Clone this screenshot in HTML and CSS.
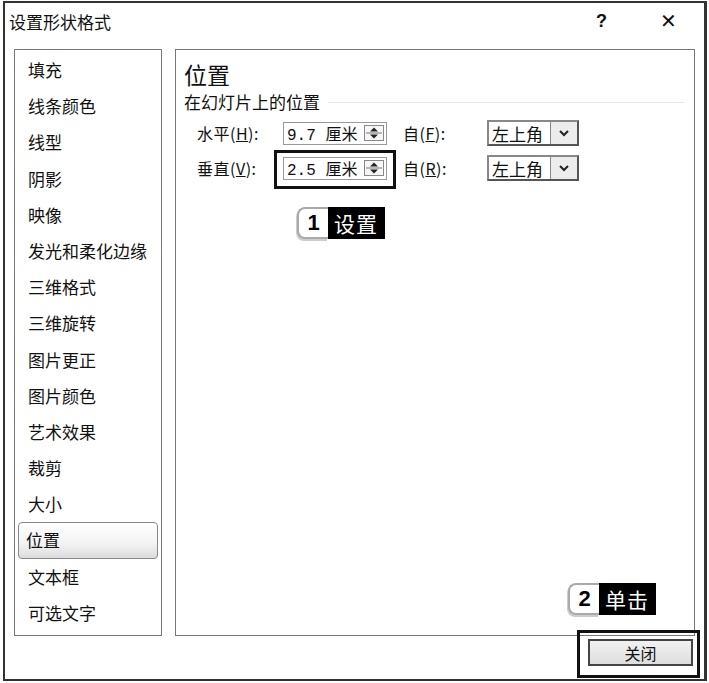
FILE: index.html
```html
<!DOCTYPE html>
<html lang="zh">
  <head>
    <meta charset="UTF-8" />
    <title>设置形状格式</title>
    <link rel="stylesheet" href="styles.css">
  </head>
  <body>
    <div class="dialog">
      <div class="titleBar">
        <span class="title">设置形状格式</span>
        <span class="help">?</span>
        <span class="close">✕</span>
      </div>

      <div class="content">
        <ul class="menu">
          <li>填充</li>
          <li>线条颜色</li>
          <li>线型</li>
          <li>阴影</li>
          <li>映像</li>
          <li>发光和柔化边缘</li>
          <li>三维格式</li>
          <li>三维旋转</li>
          <li>图片更正</li>
          <li>图片颜色</li>
          <li>艺术效果</li>
          <li>裁剪</li>
          <li>大小</li>
          <li class="active">位置</li>
          <li>文本框</li>
          <li>可选文字</li>
        </ul>

        <div class="panel">
          <h2>位置</h2>
          <div class="group">
            <span>在幻灯片上的位置</span>
            <span class="rule"></span>
          </div>

          <div class="row">
            <label class="label">水平(<u>H</u>):</label>
            <div class="spin">
              <span class="value">9.7 厘米</span>
              <span class="spinBtn">
                <svg width="20" height="16" viewBox="0 0 20 16">
                  <rect x="0.5" y="0.5" width="19" height="15" fill="#f6f6f6" stroke="#888"/>
                  <line x1="2" y1="8" x2="18" y2="8" stroke="#777"/>
                  <path d="M6 6.5 L10 2.5 L14 6.5 Z" fill="#222"/>
                  <path d="M6 9.5 L10 13.5 L14 9.5 Z" fill="#222"/>
                </svg>
              </span>
            </div>
            <label class="label from">自(<u>F</u>):</label>
            <div class="select">
              <span class="value">左上角</span>
              <span class="selBtn">
                <svg width="12" height="8" viewBox="0 0 12 8">
                  <path d="M2 2 L6 6 L10 2" fill="none" stroke="#222" stroke-width="2"/>
                </svg>
              </span>
            </div>
          </div>

          <div class="row">
            <label class="label">垂直(<u>V</u>):</label>
            <div class="spin">
              <span class="value">2.5 厘米</span>
              <span class="spinBtn">
                <svg width="20" height="16" viewBox="0 0 20 16">
                  <rect x="0.5" y="0.5" width="19" height="15" fill="#f6f6f6" stroke="#888"/>
                  <line x1="2" y1="8" x2="18" y2="8" stroke="#777"/>
                  <path d="M6 6.5 L10 2.5 L14 6.5 Z" fill="#222"/>
                  <path d="M6 9.5 L10 13.5 L14 9.5 Z" fill="#222"/>
                </svg>
              </span>
            </div>
            <label class="label from">自(<u>R</u>):</label>
            <div class="select">
              <span class="value">左上角</span>
              <span class="selBtn">
                <svg width="12" height="8" viewBox="0 0 12 8">
                  <path d="M2 2 L6 6 L10 2" fill="none" stroke="#222" stroke-width="2"/>
                </svg>
              </span>
            </div>
          </div>
        </div>
      </div>

      <div class="footer">
        <button class="closeButton">关闭</button>
      </div>

      <!-- annotations laid over the dialog -->
      <div class="mark markSpin"></div>
      <div class="mark markClose"></div>
      <div class="callout calloutOne"><span class="num">1</span><span class="tag">设置</span></div>
      <div class="callout calloutTwo"><span class="num">2</span><span class="tag">单击</span></div>
    </div>
  </body>
</html>
```

FILE: styles.css
```css
body {
  margin: 0;
  background: #fff;
  font-family: "Noto Sans CJK SC", "Liberation Sans", sans-serif;
  color: #111;
}

.dialog {
  position: relative;
  box-sizing: border-box;
  margin: 1px 0 0 3px;
  width: 704px;
  height: 680px;
  border: 2px solid #333;
  border-right-width: 3px;
  background: #fff;
}

.titleBar {
  display: flex;
  align-items: center;
  height: 36px;
  padding-left: 4px;
  font-size: 17px;
}

.title {
  flex: 1;
}

.help {
  font-family: "Liberation Sans", sans-serif;
  font-size: 18px;
  font-weight: bold;
  width: 64px;
}

.close {
  font-family: "DejaVu Sans", sans-serif;
  font-size: 20px;
  width: 44px;
}

.content {
  display: flex;
  gap: 13px;
  padding: 10px 0 0 9px;
}

.menu {
  list-style: none;
  margin: 0;
  padding: 2px 3px 3px;
  box-sizing: border-box;
  width: 148px;
  height: 587px;
  border: 1px solid #777;
}

.menu li {
  height: 36.2px;
  line-height: 34px;
  padding-left: 9px;
  font-size: 17px;
  box-sizing: border-box;
  border: 1px solid transparent;
}

.menu li.active {
  border: 1px solid #888;
  border-radius: 4px;
  background: linear-gradient(#ffffff, #f3f3f3 60%, #dcdcdc);
  padding-left: 7px;
}

.panel {
  box-sizing: border-box;
  width: 520px;
  height: 587px;
  border: 1px solid #777;
  padding: 7px 8px 0 8px;
}

.panel h2 {
  margin: 0;
  font-size: 23px;
  font-weight: normal;
  line-height: 34px;
}

.group {
  display: flex;
  align-items: center;
  gap: 8px;
  font-size: 17px;
  line-height: 22px;
}

.rule {
  flex: 1;
  border-top: 1px solid #e6e6e6;
  margin-right: 2px;
}

.row {
  display: flex;
  align-items: center;
  height: 26px;
  margin-top: 7px;
  padding-left: 13px;
  font-size: 16px;
}

.row + .row {
  margin-top: 9px;
}

.label {
  width: 86px;
  letter-spacing: 0.5px;
}

.label.from {
  width: 84px;
  padding-left: 16px;
}

.spin {
  display: flex;
  align-items: center;
  justify-content: space-between;
  box-sizing: border-box;
  width: 104px;
  height: 23px;
  border: 1px solid #999;
  padding: 0 2px 0 3px;
}

.spin .value {
  font-family: "Liberation Mono", "Noto Sans CJK SC", monospace;
  font-size: 16px;
}

.spinBtn svg {
  display: block;
}

.select {
  display: flex;
  align-items: center;
  box-sizing: border-box;
  width: 92px;
  height: 26px;
  border: 2px solid #888;
  border-right-color: #555;
  border-bottom-color: #555;
}

.select .value {
  flex: 1;
  padding-left: 3px;
  font-size: 17px;
}

.selBtn {
  display: flex;
  align-items: center;
  justify-content: center;
  width: 26px;
  height: 22px;
  border-left: 1px solid #888;
  background: #ececec;
}

.footer {
  display: flex;
  justify-content: flex-end;
  padding: 3px 11px 0 0;
}

.closeButton {
  width: 105px;
  height: 27px;
  border: 2px solid #444;
  background: linear-gradient(#f2f2f2, #dedede);
  font-family: "Noto Sans CJK SC", sans-serif;
  font-size: 16px;
  color: #111;
  padding: 0;
}

.mark {
  position: absolute;
  border: 3px solid #111;
}

.markSpin {
  left: 269px;
  top: 147px;
  width: 116px;
  height: 33px;
}

.markClose {
  left: 572px;
  top: 627px;
  width: 117px;
  height: 42px;
}

.callout {
  position: absolute;
  display: flex;
  height: 32px;
}

.callout .num {
  width: 31px;
  box-sizing: border-box;
  border: 2px solid #aaa;
  border-right: 0;
  border-radius: 8px 0 0 8px;
  background: #fff;
  font-family: "Liberation Sans", sans-serif;
  font-weight: bold;
  font-size: 22px;
  line-height: 28px;
  text-align: center;
  color: #000;
  box-shadow: -1px 2px 0 #ccc;
}

.callout .tag {
  background: #000;
  color: #fff;
  padding: 0 7px 0 6px;
  font-size: 21px;
  line-height: 32px;
  letter-spacing: 1px;
}

.calloutOne {
  left: 292px;
  top: 204px;
}

.calloutTwo {
  left: 563px;
  top: 580px;
}
```
